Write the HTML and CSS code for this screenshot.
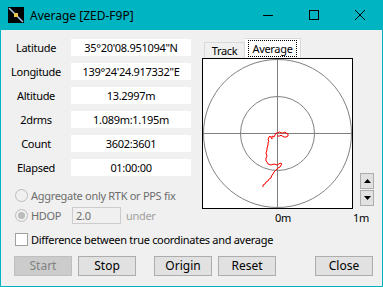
FILE: index.html
```html
<!DOCTYPE html>
<html>
<head>
  <meta charset="UTF-8">
  <link rel="stylesheet" href="styles.css">
</head>
<body>
  <div class="window">
    <div class="titlebar">
      <svg class="app-icon" width="16" height="16" viewBox="0 0 16 16">
        <rect width="16" height="16" fill="#000"/>
        <line x1="1" y1="1" x2="15" y2="15" stroke="#a9c7e8" stroke-width="1.5"/>
        <rect x="6" y="6" width="4" height="4" fill="#e8c64a"/>
      </svg>
      <span class="title">Average [ZED-F9P]</span>
      <div class="caption-buttons">
        <span class="cap"><svg width="10" height="10" viewBox="0 0 10 10"><line x1="0" y1="5.5" x2="10" y2="5.5" stroke="#000"/></svg></span>
        <span class="cap"><svg width="10" height="10" viewBox="0 0 10 10"><rect x="0.5" y="0.5" width="9" height="9" fill="none" stroke="#000"/></svg></span>
        <span class="cap"><svg width="10" height="10" viewBox="0 0 10 10"><path d="M0 0L10 10M10 0L0 10" stroke="#000" stroke-width="1"/></svg></span>
      </div>
    </div>

    <div class="content">
      <div class="top">
        <div class="left">
          <div class="fields">
            <span class="label">Latitude</span><span class="value">35°20'08.951094"N</span>
            <span class="label">Longitude</span><span class="value">139°24'24.917332"E</span>
            <span class="label">Altitude</span><span class="value">13.2997m</span>
            <span class="label">2drms</span><span class="value">1.089m:1.195m</span>
            <span class="label">Count</span><span class="value">3602:3601</span>
            <span class="label">Elapsed</span><span class="value">01:00:00</span>
          </div>
          <div class="option disabled aggregate">
            <span class="radio"></span>Aggregate only RTK or PPS fix
          </div>
          <div class="option disabled hdop">
            <span class="radio checked"></span><span class="hdop-label">HDOP</span>
            <span class="input">2.0</span><span class="under">under</span>
          </div>
        </div>

        <div class="right">
          <div class="tabs">
            <span class="tab">Track</span>
            <span class="tab active"><span class="focus">Average</span></span>
          </div>
          <div class="plot-row">
            <svg class="plot" width="151" height="151" viewBox="0 0 151 151">
              <rect x="0" y="0" width="151" height="151" fill="#fff"/>
              <circle cx="75.5" cy="75.5" r="74" fill="none" stroke="#808080"/>
              <circle cx="75.5" cy="75.5" r="37" fill="none" stroke="#808080"/>
              <line x1="75.5" y1="0" x2="75.5" y2="151" stroke="#808080"/>
              <line x1="0" y1="75.5" x2="151" y2="75.5" stroke="#808080"/>
              <polyline fill="none" stroke="#ff0000" stroke-width="1"
                points="61,129 61,127 63,126 64,124 66,123 67,121 69,120 70,117 71,116 72,114 73,113 75,111 76,110 78,109 79,107 80,106 78,105 77,106 75,107 72,106 69,107 66,106 65,104 64,103 64,100 65,98 64,95 65,92 65,90 66,87 66,85 67,83 66,82 67,79 68,78 70,81 70,78 72,79 73,77 74,75 76,75 77,74 78,74 79,75 81,75 83,74 84,75 86,76 86,78 84,79 82,79 80,78 79,77 78,78 75,78"/>
              <rect x="0.5" y="0.5" width="150" height="150" fill="none" stroke="#000"/>
            </svg>
            <div class="spin">
              <span class="spin-btn"><svg width="7" height="4" viewBox="0 0 7 4"><path d="M3.5 0L7 4H0Z" fill="#000"/></svg></span>
              <span class="spin-btn"><svg width="7" height="4" viewBox="0 0 7 4"><path d="M0 0H7L3.5 4Z" fill="#000"/></svg></span>
            </div>
          </div>
          <div class="scale">
            <span class="zero">0m</span>
            <span class="one">1m</span>
          </div>
        </div>
      </div>

      <div class="option check-row">
        <span class="checkbox"></span>Difference between true coordinates and average
      </div>

      <div class="buttons">
        <span class="button disabled start">Start</span>
        <span class="button stop">Stop</span>
        <span class="button origin">Origin</span>
        <span class="button reset">Reset</span>
        <span class="button close">Close</span>
      </div>
    </div>
  </div>
</body>
</html>
```

FILE: styles.css
```css
body {
  margin: 0;
  padding: 0;
  background-color: #ffffff;
  font-family: "Noto Sans", "Open Sans", sans-serif;
  font-size: 11px;
  color: #000000;
}

.window {
  width: 383px;
  height: 287px;
  box-sizing: border-box;
  border: 1px solid #00b4c1;
  border-top: 0;
  background-color: #f0f0f0;
  overflow: hidden;
}

/* title bar */

.titlebar {
  height: 30px;
  margin: 0 -1px;
  background-color: #00b4c1;
  display: flex;
  align-items: center;
}

.app-icon {
  margin-left: 8px;
  margin-right: 6px;
}

.title {
  font-size: 12px;
  flex: 1;
}

.caption-buttons {
  display: flex;
  height: 30px;
}

.cap {
  width: 46px;
  height: 30px;
  display: flex;
  align-items: center;
  justify-content: center;
}

/* body */

.content {
  display: flex;
  flex-direction: column;
  letter-spacing: -0.3px;
}

.top {
  display: flex;
  height: 195px;
}

.left {
  width: 190px;
  padding-top: 9px;
  padding-left: 5px;
}

.fields {
  display: grid;
  grid-template-columns: 60px 120px;
  grid-auto-rows: 17px;
  column-gap: 5px;
  row-gap: 7px;
}

.label {
  text-align: center;
  line-height: 17px;
}

.value {
  background-color: #ffffff;
  text-align: center;
  line-height: 17px;
}

.option {
  display: flex;
  align-items: center;
  margin-left: 9px;
}

.disabled {
  color: #6d6d6d;
}

.aggregate {
  height: 16px;
  margin-top: 11px;
}

.hdop {
  height: 17px;
  margin-top: 4px;
}

.radio {
  width: 11px;
  height: 11px;
  border: 1px solid #bcbcbc;
  border-radius: 50%;
  background-color: #f0f0f0;
  margin-right: 3px;
  display: flex;
  align-items: center;
  justify-content: center;
}

.radio.checked::after {
  content: "";
  width: 7px;
  height: 7px;
  border-radius: 50%;
  background-color: #bcbcbc;
}

.hdop-label {
  width: 41px;
}

.input {
  width: 44px;
  height: 15px;
  line-height: 15px;
  border: 1px solid #cccccc;
  padding-left: 3px;
  color: #6d6d6d;
}

.under {
  margin-left: 5px;
  color: #a0a0a0;
}

/* right side */

.right {
  margin-left: 6px;
  padding-top: 9px;
}

.tabs {
  display: flex;
  align-items: flex-end;
  height: 19px;
  padding-left: 2px;
}

.tab {
  height: 15px;
  line-height: 15px;
  width: 39px;
  text-align: center;
  border: 1px solid #d9d9d9;
  border-bottom: 0;
  background-color: #f0f0f0;
}

.tab.active {
  height: 19px;
  width: 55px;
  border-left: 0;
  background-color: #ffffff;
  display: flex;
  align-items: center;
  justify-content: center;
}

.focus {
  outline: 1px dotted #000;
  padding: 0 3px;
  line-height: 15px;
}

.plot-row {
  display: flex;
}

.plot {
  display: block;
}

.spin {
  margin-left: 7px;
  margin-bottom: 3px;
  align-self: flex-end;
  display: flex;
  flex-direction: column;
  gap: 1px;
}

.spin-btn {
  width: 12px;
  height: 14px;
  border: 1px solid #adadad;
  background-color: #e1e1e1;
  display: flex;
  align-items: center;
  justify-content: center;
}

.scale {
  display: flex;
  height: 14px;
  line-height: 14px;
  margin-top: 2px;
}

.zero {
  margin-left: 73px;
}

.one {
  margin-left: 62px;
}

/* checkbox + buttons */

.check-row {
  height: 13px;
  margin-top: 8px;
  margin-left: 14px;
}

.checkbox {
  width: 11px;
  height: 11px;
  border: 1px solid #a0a0a0;
  background-color: #ffffff;
  margin-right: 3px;
}

.buttons {
  display: flex;
  margin-top: 10px;
  margin-left: 13px;
}

.button {
  width: 56px;
  height: 18px;
  line-height: 18px;
  text-align: center;
  border: 1px solid #adadad;
  background-color: #e1e1e1;
  font-size: 12px;
  letter-spacing: 0;
}

.button.disabled {
  border-color: #bfbfbf;
  background-color: #cccccc;
  color: #838383;
}

.stop {
  margin-left: 6px;
}

.origin {
  margin-left: 18px;
}

.reset {
  margin-left: 6px;
}

.close {
  margin-left: 39px;
}
```
